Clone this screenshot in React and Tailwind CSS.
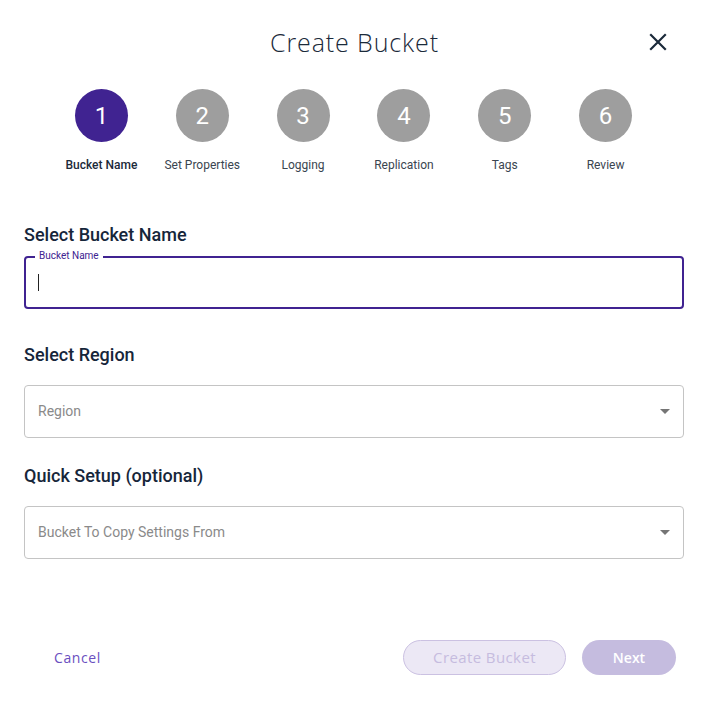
import React from 'react';

const steps = ['Bucket Name', 'Set Properties', 'Logging', 'Replication', 'Tags', 'Review'];

function Caret() {
  return (
    <svg width="10" height="5" viewBox="0 0 10 5" className="shrink-0">
      <path d="M0 0h10L5 5z" fill="#757575" />
    </svg>
  );
}

function SelectBox({ placeholder }) {
  return (
    <div className="flex h-[53px] items-center justify-between rounded border border-[#c4c4c4] pl-[13px] pr-[13px]">
      <span className="text-[14px] text-[#8a8a8a]">{placeholder}</span>
      <Caret />
    </div>
  );
}

function App() {
  return (
    <div className="min-h-screen bg-white font-['Roboto',sans-serif]">
      <header className="relative flex h-[86px] items-center justify-center">
        <h1 className="font-['Open_Sans',sans-serif] text-[25px] font-light tracking-[0.9px] text-[#1b2a3a]">
          Create Bucket
        </h1>
        <button className="absolute right-[41px] top-[32px] text-[#1b2a3a]">
          <svg width="20" height="20" viewBox="0 0 20 20">
            <path d="M3 3l14 14M17 3L3 17" stroke="currentColor" strokeWidth="2.2" strokeLinecap="square" />
          </svg>
        </button>
      </header>

      <div className="ml-[51px] grid w-[605px] grid-cols-6 pt-[3px]">
        {steps.map((s, i) => (
          <div key={s} className="flex flex-col items-center">
            <div
              className={
                'flex h-[53px] w-[53px] items-center justify-center rounded-full text-[24px] text-white ' +
                (i === 0 ? 'bg-[#402391]' : 'bg-[#9e9e9e]')
              }
            >
              {i + 1}
            </div>
            <span className={'mt-[14px] text-[12px] ' + (i === 0 ? 'font-medium text-[#1b2a3a]' : 'text-[#3a4550]')}>
              {s}
            </span>
          </div>
        ))}
      </div>

      <main className="pl-[24px] pr-[25px] pt-[49px]">
        <h2 className="text-[18px] font-medium leading-[24px] text-[#16263a]">Select Bucket Name</h2>
        <div className="relative mt-[9px] h-[53px] rounded border-2 border-[#402391]">
          <span className="absolute -top-[8px] left-[9px] bg-white px-[4px] text-[10px] leading-[12px] text-[#402391]">
            Bucket Name
          </span>
          <div className="flex h-full items-center pl-[12px]">
            <span className="h-[17px] w-px bg-[#222]" />
          </div>
        </div>

        <h2 className="mt-[34px] text-[18px] font-medium leading-[24px] text-[#16263a]">Select Region</h2>
        <div className="mt-[18px]">
          <SelectBox placeholder="Region" />
        </div>

        <h2 className="mt-[26px] text-[18px] font-medium leading-[24px] text-[#16263a]">Quick Setup (optional)</h2>
        <div className="mt-[18px]">
          <SelectBox placeholder="Bucket To Copy Settings From" />
        </div>
      </main>

      <footer className="mt-[81px] flex items-center justify-between pl-[54px] pr-[33px] font-['Open_Sans',sans-serif]">
        <button className="text-[14px] tracking-[0.6px] text-[#6a4fbf]">Cancel</button>
        <div className="flex items-center gap-[16px]">
          <button className="h-[35px] w-[163px] rounded-full border border-[#cbc1e2] bg-[#ece8f5] text-[15px] tracking-[0.4px] text-[#c6bcdf]">
            Create Bucket
          </button>
          <button className="h-[35px] w-[94px] rounded-full bg-[#c5bcdf] text-[14px] font-semibold text-white">
            Next
          </button>
        </div>
      </footer>
    </div>
  );
}

export default App;
